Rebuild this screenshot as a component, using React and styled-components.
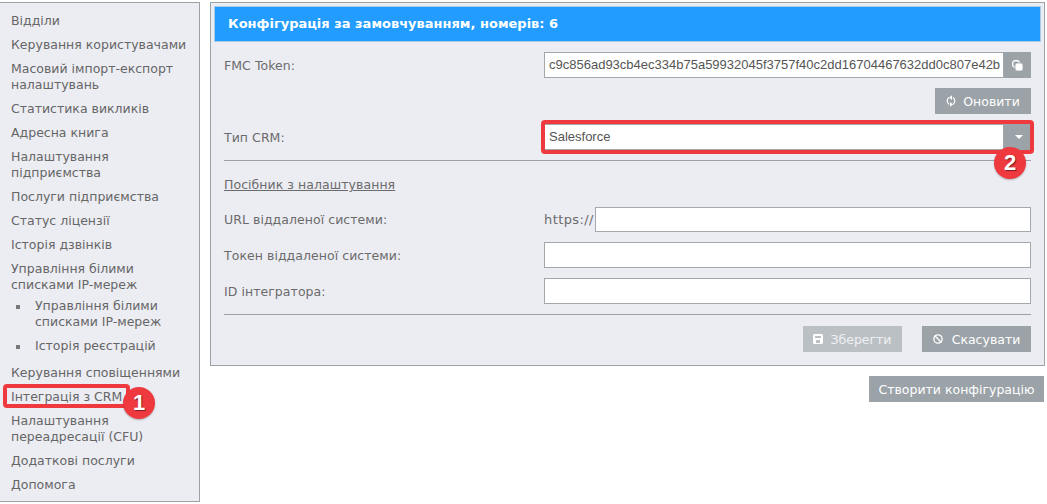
import React from "react";
import styled, { createGlobalStyle } from "styled-components";
import { Ban } from "lucide-react";

const GlobalStyle = createGlobalStyle`
  html, body {
    margin: 0;
    padding: 0;
    background: #fff;
  }
  body {
    font-family: "DejaVu Sans", Verdana, sans-serif;
    font-size: 12.5px;
    color: #6b6b6b;
  }
`;

const Page = styled.div`
  position: relative;
  width: 1047px;
  height: 504px;
  overflow: hidden;
  display: flex;
  align-items: flex-start;
  padding-top: 2px;
  box-sizing: border-box;
`;

const Sidebar = styled.ul`
  list-style: none;
  margin: 0 10px 0 0;
  padding: 6px 0 0;
  width: 200px;
  height: 500px;
  box-sizing: border-box;
  background: #ecedf3;
  border: 1px solid #9ba3a8;
  border-left: none;
  flex-shrink: 0;
`;

const MenuItem = styled.li`
  padding: 4px 8px 4px 11px;
  line-height: 16px;
  font-size: 12.5px;
  color: #666;
`;

const SubList = styled.ul`
  list-style: none;
  margin: -3px 0 3px;
  padding: 0;
`;

const SubItem = styled.li`
  position: relative;
  padding: 4px 8px 4px 35px;
  line-height: 16px;
  font-size: 12.5px;
  color: #666;

  &::before {
    content: "";
    position: absolute;
    left: 16px;
    top: 11px;
    width: 4px;
    height: 4px;
    background: #777;
  }
`;

const Content = styled.div`
  width: 835px;
  display: flex;
  flex-direction: column;
  align-items: flex-end;
`;

const Panel = styled.section`
  width: 835px;
  height: 364px;
  box-sizing: border-box;
  background: #ecedf3;
  border: 1px solid #9ba3a8;
  padding: 3px;
`;

const PanelHeader = styled.h2`
  margin: 0;
  height: 36px;
  box-sizing: border-box;
  background: #229dff;
  border: 1px solid #a9cbe8;
  color: #fff;
  font-size: 13px;
  font-weight: 700;
  line-height: 34px;
  padding-left: 13px;
`;

const Form = styled.div`
  padding: 10px 10px 0 10px;
`;

const Row = styled.div`
  display: flex;
  align-items: center;
  height: ${(p) => p.$height || 26}px;
  margin-top: ${(p) => p.$top || 0}px;
`;

const Label = styled.label`
  width: 320px;
  flex-shrink: 0;
  font-size: 12.5px;
  letter-spacing: 0.05px;
  color: #6b6b6b;
`;

const FieldGroup = styled.div`
  display: flex;
  flex: 1;
  min-width: 0;
  height: 100%;
  align-items: stretch;
`;

const TextBox = styled.div`
  flex: 1;
  min-width: 0;
  box-sizing: border-box;
  background: #fff;
  border: 1px solid #a3a8ad;
  font-family: "Liberation Sans", Arial, sans-serif;
  font-size: 13px;
  line-height: 24px;
  padding-left: 4px;
  color: #555;
  white-space: nowrap;
  overflow: hidden;
`;

const Prefix = styled.span`
  width: 51px;
  flex-shrink: 0;
  font-size: 13px;
  letter-spacing: 0.4px;
  line-height: 26px;
  color: #6b6b6b;
`;

const AddonButton = styled.div`
  width: 27px;
  flex-shrink: 0;
  background: #9ba3a8;
  color: #fff;
  display: flex;
  align-items: center;
  justify-content: center;
`;

const Caret = styled.span`
  width: 0;
  height: 0;
  margin-left: 2px;
  border-left: 4px solid transparent;
  border-right: 4px solid transparent;
  border-top: 4px solid #fff;
`;

const Divider = styled.hr`
  border: none;
  border-top: 1px solid #9ba3a8;
  margin: ${(p) => p.$top}px 0 0;
`;

const GuideLink = styled.a`
  display: block;
  margin-top: 16px;
  height: 16px;
  line-height: 16px;
  font-size: 12.5px;
  letter-spacing: 0.05px;
  color: #6b6b6b;
  text-decoration: underline;
`;

const Actions = styled.div`
  display: flex;
  justify-content: flex-end;
  gap: ${(p) => p.$gap || 0}px;
  margin-top: ${(p) => p.$top || 0}px;
`;

const Button = styled.button`
  display: inline-flex;
  align-items: center;
  justify-content: center;
  gap: ${(p) => p.$gap || 7}px;
  width: ${(p) => p.$width}px;
  height: 26px;
  padding: 0;
  border: none;
  background: ${(p) => (p.$muted ? "#bbc0c4" : "#9ba3a8")};
  color: ${(p) => (p.$muted ? "#f0f0f2" : "#fff")};
  font-family: inherit;
  font-size: 12.5px;
`;

const CreateWrap = styled.div`
  width: 100%;
  display: flex;
  justify-content: flex-end;
  margin-top: 10px;
  padding-right: 1px;
  box-sizing: border-box;
`;

const Highlight = styled.div`
  position: absolute;
  left: ${(p) => p.$left}px;
  top: ${(p) => p.$top}px;
  width: ${(p) => p.$width}px;
  height: ${(p) => p.$height}px;
  box-sizing: border-box;
  border: 4px solid #ee3a3f;
  border-radius: 4px;
  pointer-events: none;
`;

const Badge = styled.div`
  position: absolute;
  left: ${(p) => p.$left}px;
  top: ${(p) => p.$top}px;
  width: 32px;
  height: 32px;
  border-radius: 50%;
  background: #ee3a3f;
  color: #fff;
  font-family: "Liberation Sans", Arial, sans-serif;
  font-size: 22px;
  font-weight: 700;
  line-height: 32px;
  text-align: center;
  text-shadow: 1px 1px 1px rgba(0, 0, 0, 0.5);
  box-shadow: 0 1px 2px rgba(0, 0, 0, 0.25);
`;

const CopyIcon = () => (
  <svg width="11" height="11" viewBox="0 0 11 11" aria-hidden="true">
    <rect x="0.75" y="0.75" width="6.5" height="6.5" rx="2" fill="none" stroke="#fff" strokeWidth="1.3" />
    <rect x="3" y="3" width="8" height="8" rx="2" fill="#fff" stroke="#9ba3a8" strokeWidth="0.8" />
  </svg>
);

const RefreshIcon = () => (
  <svg width="10" height="12" viewBox="0 0 10 12" fill="none" aria-hidden="true">
    <path d="M3 2.6A4 4 0 0 0 3.2 9.4" stroke="#fff" strokeWidth="1.2" />
    <path d="M7 2.6A4 4 0 0 1 6.8 9.4" stroke="#fff" strokeWidth="1.2" />
    <path d="M6 0.2V5L3 2.6z" fill="#fff" />
    <path d="M4 11.8V7L7 9.4z" fill="#fff" />
  </svg>
);

const SaveIcon = () => (
  <svg width="10" height="10" viewBox="0 0 10 10" aria-hidden="true">
    <path
      fillRule="evenodd"
      fill="#fff"
      d="M1.5 0H8.5A1.5 1.5 0 0 1 10 1.5V8.5A1.5 1.5 0 0 1 8.5 10H1.5A1.5 1.5 0 0 1 0 8.5V1.5A1.5 1.5 0 0 1 1.5 0ZM2 2V4H8V2ZM3 6V9H7V6Z"
    />
  </svg>
);

const menuBefore = [
  "Відділи",
  "Керування користувачами",
  "Масовий імпорт-експорт налаштувань",
  "Статистика викликів",
  "Адресна книга",
  "Налаштування підприємства",
  "Послуги підприємства",
  "Статус ліцензії",
  "Історія дзвінків",
  "Управління білими списками IP-мереж",
];

const menuAfter = [
  "Керування сповіщеннями",
  "Інтеграція з CRM",
  "Налаштування переадресації (CFU)",
  "Додаткові послуги",
  "Допомога",
];

const App = () => {
  return (
    <Page>
      <GlobalStyle />
      <Sidebar>
        {menuBefore.map((item) => (
          <MenuItem key={item}>{item}</MenuItem>
        ))}
        <SubList>
          <SubItem>Управління білими списками IP-мереж</SubItem>
          <SubItem>Історія реєстрацій</SubItem>
        </SubList>
        {menuAfter.map((item) => (
          <MenuItem key={item}>{item}</MenuItem>
        ))}
      </Sidebar>
      <Content>
        <Panel>
          <PanelHeader>Конфігурація за замовчуванням, номерів: 6</PanelHeader>
          <Form>
            <Row>
              <Label>FMC Token:</Label>
              <FieldGroup>
                <TextBox>c9c856ad93cb4ec334b75a59932045f3757f40c2dd16704467632dd0c807e42b</TextBox>
                <AddonButton>
                  <CopyIcon />
                </AddonButton>
              </FieldGroup>
            </Row>
            <Actions $top={10}>
              <Button $width={96}>
                <RefreshIcon />
                Оновити
              </Button>
            </Actions>
            <Row $top={10}>
              <Label>Тип CRM:</Label>
              <FieldGroup>
                <TextBox>Salesforce</TextBox>
                <AddonButton>
                  <Caret />
                </AddonButton>
              </FieldGroup>
            </Row>
            <Divider $top={10} />
            <GuideLink>Посібник з налаштування</GuideLink>
            <Row $top={14} $height={25}>
              <Label>URL віддаленої системи:</Label>
              <Prefix>https://</Prefix>
              <FieldGroup>
                <TextBox />
              </FieldGroup>
            </Row>
            <Row $top={10}>
              <Label>Токен віддаленої системи:</Label>
              <FieldGroup>
                <TextBox />
              </FieldGroup>
            </Row>
            <Row $top={10}>
              <Label>ID інтегратора:</Label>
              <FieldGroup>
                <TextBox />
              </FieldGroup>
            </Row>
            <Divider $top={10} />
            <Actions $top={11} $gap={20}>
              <Button $width={99} $muted>
                <SaveIcon />
                Зберегти
              </Button>
              <Button $width={109} $gap={9}>
                <Ban size={10} strokeWidth={3.2} />
                Скасувати
              </Button>
            </Actions>
          </Form>
        </Panel>
        <CreateWrap>
          <Button $width={175}>Створити конфігурацію</Button>
        </CreateWrap>
      </Content>
      <Highlight $left={3} $top={384} $width={127} $height={24} />
      <Badge $left={123} $top={387}>1</Badge>
      <Highlight $left={541} $top={120} $width={493} $height={34} />
      <Badge $left={994} $top={147}>2</Badge>
    </Page>
  );
};

export default App;
